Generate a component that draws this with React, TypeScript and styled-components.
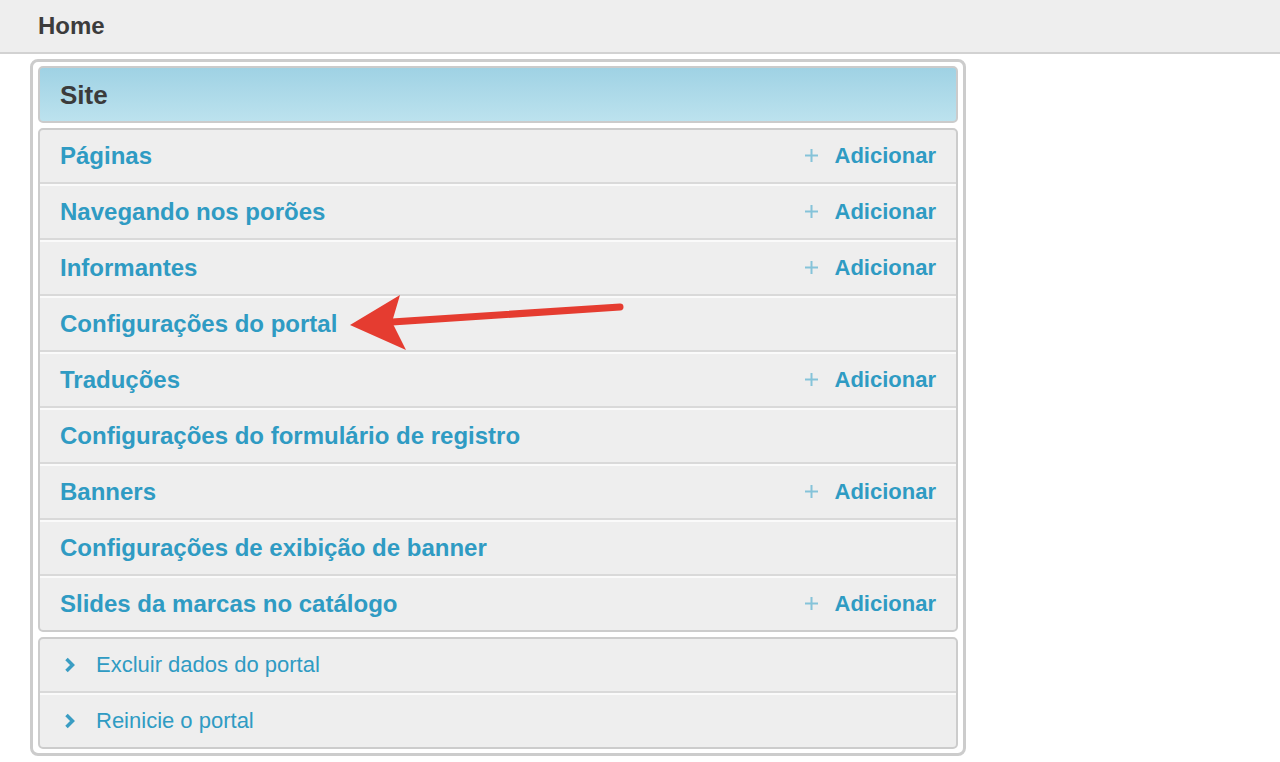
import React from 'react';
import styled, { createGlobalStyle } from 'styled-components';

const GlobalStyle = createGlobalStyle`
  body {
    margin: 0;
    background: #fff;
    font-family: "Liberation Sans", Arial, Helvetica, sans-serif;
  }
`;

const TopBar = styled.div`
  height: 52px;
  background: #eeeeee;
  border-bottom: 2px solid #d2d2d2;
  display: flex;
  align-items: center;
  padding-left: 38px;
  font-size: 24px;
  font-weight: bold;
  color: #3c3c3c;
`;

const Main = styled.div`
  padding: 5px 0 0 30px;
  position: relative;
`;

const Panel = styled.div`
  width: 920px;
  border: 3px solid #cccccc;
  border-radius: 8px;
  padding: 4px 5px 4px 5px;
  display: flex;
  flex-direction: column;
  gap: 5px;
`;

const SectionHeader = styled.div`
  height: 51px;
  border: 2px solid #cbcbcb;
  border-radius: 5px;
  background: linear-gradient(to bottom, #9fd2e4, #bce2ee);
  display: flex;
  align-items: center;
  padding: 2px 0 0 20px;
  font-size: 26px;
  font-weight: bold;
  color: #3b3b3b;
`;

const Group = styled.div`
  border: 2px solid #cccccc;
  border-radius: 5px;
  background: #eeeeee;
  overflow: hidden;
`;

const Row = styled.div`
  height: 52px;
  display: flex;
  align-items: center;
  padding: 0 20px;
  border-top: 2px solid #fafafa;
  border-bottom: 2px solid #d9d9d9;

  &:first-child {
    border-top: none;
  }

  &:last-child {
    border-bottom: none;
  }
`;

const Title = styled.span`
  flex: 1;
  font-size: 24px;
  font-weight: bold;
  color: #2f9bc3;
`;

const MinorTitle = styled.span`
  flex: 1;
  font-size: 22px;
  color: #2f9bc3;
  display: flex;
  align-items: center;
  gap: 20px;
  padding-left: 4px;
`;

const AddLink = styled.span`
  display: flex;
  align-items: center;
  gap: 16px;
  font-size: 22px;
  font-weight: bold;
  color: #2f9bc3;
  margin-top: -1px;
`;

const Arrow = styled.svg`
  position: absolute;
  left: 340px;
  top: 0;
  pointer-events: none;
`;

const PlusIcon = () => (
  <svg width="15" height="15" viewBox="0 0 15 15">
    <path d="M7.5 1v13M1 7.5h13" stroke="#85c3d9" strokeWidth="2" />
  </svg>
);

const Chevron = () => (
  <svg width="12" height="16" viewBox="0 0 12 16">
    <path d="M2.5 2l6 6-6 6" stroke="#3a9dc3" strokeWidth="3.5" fill="none" />
  </svg>
);

const items: { label: string; add: boolean }[] = [
  { label: 'Páginas', add: true },
  { label: 'Navegando nos porões', add: true },
  { label: 'Informantes', add: true },
  { label: 'Configurações do portal', add: false },
  { label: 'Traduções', add: true },
  { label: 'Configurações do formulário de registro', add: false },
  { label: 'Banners', add: true },
  { label: 'Configurações de exibição de banner', add: false },
  { label: 'Slides da marcas no catálogo', add: true },
];

const actions = ['Excluir dados do portal', 'Reinicie o portal'];

export default function App() {
  return (
    <>
      <GlobalStyle />
      <TopBar>Home</TopBar>
      <Main>
        <Panel>
          <SectionHeader>Site</SectionHeader>
          <Group>
            {items.map((it) => (
              <Row key={it.label}>
                <Title>{it.label}</Title>
                {it.add && (
                  <AddLink>
                    <PlusIcon />
                    Adicionar
                  </AddLink>
                )}
              </Row>
            ))}
          </Group>
          <Group>
            {actions.map((a) => (
              <Row key={a}>
                <MinorTitle>
                  <Chevron />
                  {a}
                </MinorTitle>
              </Row>
            ))}
          </Group>
        </Panel>
        <Arrow width="300" height="320" viewBox="340 0 300 320">
          <path d="M620 253 L392 268" stroke="#e53c30" strokeWidth="7" strokeLinecap="round" fill="none" />
          <path d="M350 271 L400 241 L392 268 L406 296 Z" fill="#e53c30" />
        </Arrow>
      </Main>
    </>
  );
}
